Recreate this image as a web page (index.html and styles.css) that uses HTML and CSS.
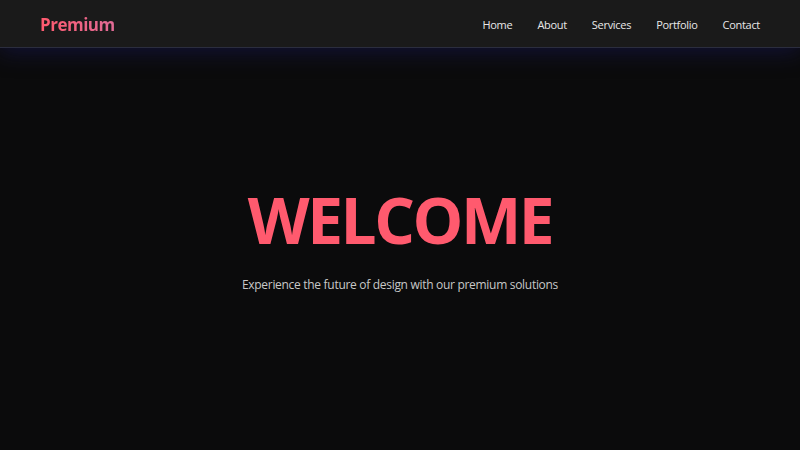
FILE: index.html
```html
<!DOCTYPE html>
<html lang="en">
<head>
<meta charset="utf-8">
<title>Premium</title>
<link rel="stylesheet" href="styles.css">
</head>
<body>
<header class="header">
  <div class="logo">Premium</div>
  <nav class="nav">
    <a href="#">Home</a>
    <a href="#">About</a>
    <a href="#">Services</a>
    <a href="#">Portfolio</a>
    <a href="#">Contact</a>
  </nav>
</header>
<main class="hero">
  <h1 class="title">WELCOME</h1>
  <p class="subtitle">Experience the future of design with our premium solutions</p>
</main>
</body>
</html>
```
FILE: styles.css
```css
* { box-sizing: border-box; }
html, body { margin: 0; padding: 0; }
body {
  background: #0b0b0c;
  font-family: "Open Sans", "Noto Sans", sans-serif;
  color: #e6e6e6;
  width: 800px;
  height: 450px;
  overflow: hidden;
}
.header {
  position: relative;
  z-index: 2;
  height: 48px;
  display: flex;
  align-items: center;
  justify-content: space-between;
  padding: 1px 40px 0;
  background: #1a1a1a;
  border-bottom: 1px solid #2b2d3e;
  box-shadow: 0 4px 22px rgba(25, 25, 90, 0.55);
}
.logo {
  font-size: 17px;
  font-weight: 700;
  letter-spacing: -0.5px;
  background: linear-gradient(90deg, #ff5a6e, #e06b96);
  -webkit-background-clip: text;
  background-clip: text;
  color: transparent;
}
.nav {
  display: flex;
  gap: 25px;
}
.nav a {
  color: #e8e8e8;
  text-decoration: none;
  font-size: 11px;
  letter-spacing: -0.3px;
}
.hero {
  height: 402px;
  display: flex;
  flex-direction: column;
  align-items: center;
  justify-content: center;
  padding-bottom: 18px;
}
.title {
  margin: 0;
  font-size: 64px;
  font-weight: 700;
  color: #ff5a6e;
  letter-spacing: -2.5px;
  line-height: 1;
}
.subtitle {
  margin: 24px 0 0;
  font-size: 12px;
  color: #c8c8c8;
  letter-spacing: -0.3px;
}
```
